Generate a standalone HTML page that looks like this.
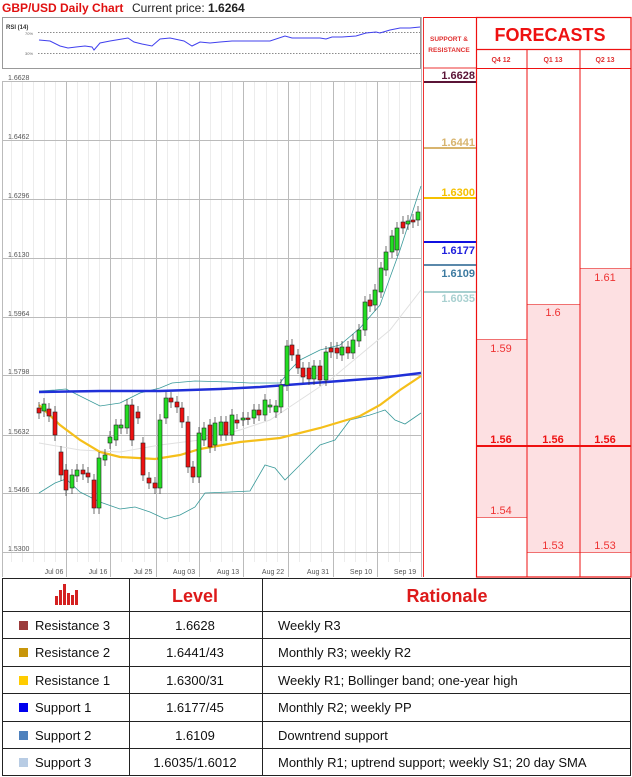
<!DOCTYPE html>
<html><head><meta charset="utf-8"><style>
body{margin:0;background:#fff;width:632px;height:777px;overflow:hidden;font-family:"Liberation Sans",sans-serif}
svg{display:block}
</style></head><body>
<svg width="632" height="777" viewBox="0 0 632 777" xmlns="http://www.w3.org/2000/svg" font-family="Liberation Sans, sans-serif">
<rect width="632" height="777" fill="#fff"/>
<text x="2" y="12" font-size="12" font-weight="bold" fill="#e01010">GBP/USD Daily Chart</text>
<text x="132" y="12" font-size="12" fill="#222">Current price: <tspan font-weight="bold">1.6264</tspan></text>
<!-- RSI -->
<rect x="2.5" y="17.5" width="418" height="51" fill="#fff" stroke="#999"/>
<text x="6" y="29" font-size="6" font-weight="bold" fill="#333">RSI (14)</text>
<text x="25" y="35" font-size="4" fill="#666">70%</text>
<text x="25" y="55" font-size="4" fill="#666">30%</text>
<line x1="38" y1="32.5" x2="420" y2="32.5" stroke="#666" stroke-dasharray="1.5,1.5" stroke-width="0.8"/>
<line x1="38" y1="53.5" x2="420" y2="53.5" stroke="#666" stroke-dasharray="1.5,1.5" stroke-width="0.8"/>
<polyline fill="none" stroke="#4040ee" stroke-width="1" points="39,40 50,41 60,46 68,48 76,47 85,46 92,47 94,50 100,43 110,41 122,39 128,38 134,42 142,44 152,46 160,39 170,38 184,41 192,46 200,42 210,43 220,42 232,41 250,41 270,41 285,36 292,38 300,38 310,38 320,38 326,39 332,37 342,37 356,36 366,33 376,32 380,33 390,30 400,28 410,28 420,27"/>
<!-- chart grid -->
<rect x="2.5" y="81" width="418" height="496" fill="#fff"/>
<g stroke="#ececec" stroke-width="1">
<line x1="77.5" y1="81" x2="77.5" y2="562"/><line x1="88.5" y1="81" x2="88.5" y2="562"/><line x1="99.5" y1="81" x2="99.5" y2="562"/>
<line x1="121.5" y1="81" x2="121.5" y2="562"/><line x1="132.5" y1="81" x2="132.5" y2="562"/><line x1="144.5" y1="81" x2="144.5" y2="562"/>
<line x1="167.5" y1="81" x2="167.5" y2="562"/><line x1="178.5" y1="81" x2="178.5" y2="562"/><line x1="189.5" y1="81" x2="189.5" y2="562"/>
<line x1="210.5" y1="81" x2="210.5" y2="562"/><line x1="221.5" y1="81" x2="221.5" y2="562"/><line x1="232.5" y1="81" x2="232.5" y2="562"/>
<line x1="254.5" y1="81" x2="254.5" y2="562"/><line x1="266.5" y1="81" x2="266.5" y2="562"/><line x1="277.5" y1="81" x2="277.5" y2="562"/>
<line x1="299.5" y1="81" x2="299.5" y2="562"/><line x1="310.5" y1="81" x2="310.5" y2="562"/><line x1="321.5" y1="81" x2="321.5" y2="562"/>
<line x1="344.5" y1="81" x2="344.5" y2="562"/><line x1="355.5" y1="81" x2="355.5" y2="562"/><line x1="366.5" y1="81" x2="366.5" y2="562"/>
<line x1="388.5" y1="81" x2="388.5" y2="562"/><line x1="399.5" y1="81" x2="399.5" y2="562"/><line x1="410.5" y1="81" x2="410.5" y2="562"/>
<line x1="11.5" y1="81" x2="11.5" y2="562"/><line x1="22.5" y1="81" x2="22.5" y2="562"/><line x1="33.5" y1="81" x2="33.5" y2="562"/><line x1="44.5" y1="81" x2="44.5" y2="562"/><line x1="55.5" y1="81" x2="55.5" y2="562"/>
</g>
<g stroke="#bbb" stroke-width="1">
<line x1="66.5" y1="81" x2="66.5" y2="577"/><line x1="110.5" y1="81" x2="110.5" y2="577"/><line x1="156.5" y1="81" x2="156.5" y2="577"/><line x1="199.5" y1="81" x2="199.5" y2="577"/><line x1="243.5" y1="81" x2="243.5" y2="577"/><line x1="288.5" y1="81" x2="288.5" y2="577"/><line x1="333.5" y1="81" x2="333.5" y2="577"/><line x1="377.5" y1="81" x2="377.5" y2="577"/>
<line x1="2" y1="81.5" x2="421" y2="81.5"/><line x1="2" y1="140.5" x2="421" y2="140.5"/><line x1="2" y1="199.5" x2="421" y2="199.5"/><line x1="2" y1="258.5" x2="421" y2="258.5"/><line x1="2" y1="317.5" x2="421" y2="317.5"/><line x1="2" y1="375.5" x2="421" y2="375.5"/><line x1="2" y1="435.5" x2="421" y2="435.5"/><line x1="2" y1="493.5" x2="421" y2="493.5"/><line x1="2" y1="552.5" x2="421" y2="552.5"/>
<line x1="2.5" y1="81" x2="2.5" y2="577"/><line x1="421.5" y1="17" x2="421.5" y2="577"/>
</g>
<g font-size="7" fill="#555">
<text x="8" y="80">1.6628</text><text x="8" y="139">1.6462</text><text x="8" y="198">1.6296</text><text x="8" y="257">1.6130</text><text x="8" y="316">1.5964</text><text x="8" y="374">1.5798</text><text x="8" y="434">1.5632</text><text x="8" y="492">1.5466</text><text x="8" y="551">1.5300</text>
</g>
<g font-size="7" fill="#555" text-anchor="middle">
<text x="54" y="574">Jul 06</text><text x="98" y="574">Jul 16</text><text x="143" y="574">Jul 25</text><text x="184" y="574">Aug 03</text><text x="228" y="574">Aug 13</text><text x="273" y="574">Aug 22</text><text x="318" y="574">Aug 31</text><text x="361" y="574">Sep 10</text><text x="405" y="574">Sep 19</text>
</g>
<!-- indicators -->
<polyline fill="none" stroke="#e0e0e0" stroke-width="1" points="39,443 80,450 120,452 160,445 200,440 240,430 270,420 300,400 330,380 360,355 390,330 421,290"/>
<polyline fill="none" stroke="#3a9a9a" stroke-width="0.8" points="39,391 55,390 66,389 80,396 100,406 120,403 140,393 160,388 172,383 195,381 230,382 250,383 280,383 290,370 300,360 320,350 340,345 360,328 380,305 400,250 421,186"/>
<polyline fill="none" stroke="#3a9a9a" stroke-width="0.8" points="39,493 55,483 66,479 80,492 100,502 120,509 135,507 150,512 165,519 180,515 195,507 205,493 230,492 250,491 265,465 275,468 285,480 295,470 320,445 335,440 350,420 370,415 385,410 395,420 405,424 421,413"/>
<polyline fill="none" stroke="#f5bf1a" stroke-width="2.2" points="39,405 60,425 80,440 100,452 120,457 155,459 180,455 200,449 240,442 280,438 320,428 360,416 380,405 400,390 421,376"/>
<polyline fill="none" stroke="#2030d8" stroke-width="2.5" points="39,392 100,391 160,391 220,389 260,387 300,384 340,381 380,378 421,373"/>
<!-- candles -->
<g id="c" stroke="#222" stroke-width="0.8"></g>
<!-- S&R column -->
<line x1="423.5" y1="17" x2="423.5" y2="577" stroke="#e33" stroke-width="1"/>
<text x="449" y="41" font-size="6.5" font-weight="bold" fill="#e03030" text-anchor="middle">SUPPORT &amp;</text>
<text x="449" y="52" font-size="6.5" font-weight="bold" fill="#e03030" text-anchor="middle">RESISTANCE</text>
<line x1="424" y1="68" x2="476" y2="68" stroke="#e33"/>
<g font-size="11" font-weight="bold" text-anchor="end">
<text x="475" y="79" fill="#5a1436">1.6628</text>
<text x="475" y="146" fill="#d8b46e">1.6441</text>
<text x="475" y="196" fill="#f5c000">1.6300</text>
<text x="475" y="254" fill="#2020dd">1.6177</text>
<text x="475" y="277" fill="#3c7aa0">1.6109</text>
<text x="475" y="302" fill="#a8d0d0">1.6035</text>
</g>
<rect x="424" y="81" width="52" height="2" fill="#5a1436"/>
<rect x="424" y="147" width="52" height="2" fill="#d8b46e"/>
<rect x="424" y="197" width="52" height="2" fill="#f5c000"/>
<rect x="424" y="241" width="52" height="2" fill="#1010e0"/>
<rect x="424" y="264" width="52" height="2" fill="#5a88aa"/>
<rect x="424" y="291" width="52" height="2" fill="#a8d0d0"/>
<!-- forecasts -->
<rect x="477" y="339" width="50" height="178" fill="#fde0e2"/>
<rect x="527" y="304" width="53" height="248" fill="#fde0e2"/>
<rect x="580" y="268" width="51" height="284" fill="#fde0e2"/>
<g stroke="#f07070" stroke-width="1">
<line x1="476" y1="339.5" x2="527" y2="339.5"/><line x1="476" y1="517.5" x2="527" y2="517.5"/>
<line x1="527" y1="304.5" x2="580" y2="304.5"/><line x1="527" y1="552.5" x2="631" y2="552.5"/>
<line x1="580" y1="268.5" x2="631" y2="268.5"/>
</g>
<g fill="none" stroke="#ee1111">
<rect x="476.5" y="17.5" width="154.5" height="559.5" stroke-width="1.2"/>
<line x1="424" y1="17.5" x2="476" y2="17.5"/>
<line x1="476" y1="49.5" x2="631" y2="49.5" stroke-width="1.2"/>
<line x1="476" y1="68.5" x2="631" y2="68.5"/>
<line x1="527" y1="49" x2="527" y2="577"/><line x1="580" y1="49" x2="580" y2="577"/>
<line x1="476" y1="446" x2="631" y2="446" stroke-width="2"/>
</g>
<text x="550" y="41" font-size="18" font-weight="bold" fill="#ee1111" text-anchor="middle">FORECASTS</text>
<g font-size="7" font-weight="bold" fill="#e03030" text-anchor="middle"><text x="501" y="62">Q4 12</text><text x="553" y="62">Q1 13</text><text x="605" y="62">Q2 13</text></g>
<g font-size="11" fill="#ee3333" text-anchor="middle">
<text x="501" y="352">1.59</text><text x="501" y="514">1.54</text>
<text x="553" y="316">1.6</text><text x="553" y="549">1.53</text>
<text x="605" y="281">1.61</text><text x="605" y="549">1.53</text>
</g>
<g font-size="11" font-weight="bold" fill="#ee1111" text-anchor="middle"><text x="501" y="443">1.56</text><text x="553" y="443">1.56</text><text x="605" y="443">1.56</text></g>
<!-- bottom table -->
<rect x="0" y="578" width="632" height="199" fill="#fff"/>
<g stroke="#222" stroke-width="1" fill="none">
<rect x="2.5" y="578.5" width="628" height="197"/>
<line x1="129.5" y1="578" x2="129.5" y2="776"/><line x1="262.5" y1="578" x2="262.5" y2="776"/>
<line x1="2" y1="611.5" x2="631" y2="611.5"/><line x1="2" y1="638.5" x2="631" y2="638.5"/><line x1="2" y1="666.5" x2="631" y2="666.5"/><line x1="2" y1="693.5" x2="631" y2="693.5"/><line x1="2" y1="721.5" x2="631" y2="721.5"/><line x1="2" y1="748.5" x2="631" y2="748.5"/>
</g>
<g fill="#d42020"><rect x="55" y="596" width="3" height="9"/><rect x="59" y="590" width="3" height="15"/><rect x="63" y="584" width="3" height="21"/><rect x="67" y="593" width="3" height="12"/><rect x="71" y="595" width="3" height="10"/><rect x="75" y="590" width="3" height="15"/></g>
<g font-size="18" font-weight="bold" fill="#dd1a1a" text-anchor="middle"><text x="195" y="602">Level</text><text x="447" y="602">Rationale</text></g>
<rect x="19" y="621" width="9" height="9" fill="#9b3b3b"/>
<rect x="19" y="648" width="9" height="9" fill="#c8960a"/>
<rect x="19" y="676" width="9" height="9" fill="#ffcc00"/>
<rect x="19" y="703" width="9" height="9" fill="#0000ee"/>
<rect x="19" y="731" width="9" height="9" fill="#4f81bd"/>
<rect x="19" y="758" width="9" height="9" fill="#b8cce4"/>
<g font-size="13" fill="#111">
<text x="35" y="630">Resistance 3</text><text x="35" y="657">Resistance 2</text><text x="35" y="685">Resistance 1</text><text x="35" y="712">Support 1</text><text x="35" y="740">Support 2</text><text x="35" y="767">Support 3</text>
<text x="278" y="630">Weekly R3</text><text x="278" y="657">Monthly R3; weekly R2</text><text x="278" y="685">Weekly R1; Bollinger band; one-year high</text><text x="278" y="712">Monthly R2; weekly PP</text><text x="278" y="740">Downtrend support</text><text x="278" y="767">Monthly R1; uptrend support; weekly S1; 20 day SMA</text>
</g>
<g font-size="13" fill="#111" text-anchor="middle">
<text x="195" y="630">1.6628</text><text x="195" y="657">1.6441/43</text><text x="195" y="685">1.6300/31</text><text x="195" y="712">1.6177/45</text><text x="195" y="740">1.6109</text><text x="195" y="767">1.6035/1.6012</text>
</g>
</svg>
<script>
var d=[[39,413,408,'r'],[44,411,404,'g'],[49,409,416,'r'],[55,412,435,'r'],[61,452,475,'r'],[66,470,490,'r'],[72,488,475,'g'],[77,476,470,'g'],[83,470,474,'r'],[88,473,477,'r'],[94,480,508,'r'],[99,508,458,'g'],[105,460,455,'g'],[110,443,437,'g'],[116,440,425,'g'],[121,428,425,'g'],[127,428,405,'g'],[132,405,440,'r'],[138,412,418,'r'],[143,443,475,'r'],[149,478,483,'r'],[155,483,488,'r'],[160,488,420,'g'],[166,418,398,'g'],[171,398,402,'r'],[177,402,407,'r'],[182,408,422,'r'],[188,422,467,'r'],[193,467,477,'r'],[199,477,433,'g'],[204,440,428,'g'],[210,425,447,'r'],[215,445,423,'g'],[221,435,422,'g'],[226,422,435,'r'],[232,435,415,'g'],[237,420,423,'r'],[243,420,418,'g'],[248,418,419,'r'],[254,418,410,'g'],[259,410,415,'r'],[265,415,400,'g'],[270,407,405,'g'],[276,412,406,'g'],[281,407,385,'g'],[287,385,346,'g'],[292,345,355,'r'],[298,355,368,'r'],[303,368,377,'r'],[309,368,379,'r'],[314,379,366,'g'],[320,366,380,'r'],[326,380,352,'g'],[331,348,352,'r'],[337,348,353,'r'],[342,355,347,'g'],[348,347,353,'r'],[353,353,340,'g'],[359,341,330,'g'],[365,330,302,'g'],[370,300,306,'r'],[375,305,290,'g'],[381,292,268,'g'],[386,270,252,'g'],[392,252,236,'g'],[397,250,228,'g'],[403,222,228,'r'],[408,224,221,'g'],[413,220,222,'r'],[418,220,212,'g']];
var g=document.getElementById('c'),s='';
d.forEach(function(c){var t=Math.min(c[1],c[2]),b=Math.max(c[1],c[2]),h=Math.max(b-t,1.5);
s+='<line x1="'+c[0]+'" x2="'+c[0]+'" y1="'+(t-6)+'" y2="'+(b+6)+'" stroke="#333" stroke-width="0.7"/>';
s+='<rect x="'+(c[0]-2)+'" y="'+t+'" width="4" height="'+h+'" fill="'+(c[3]=='g'?'#22dd22':'#ee1111')+'" stroke="#222" stroke-width="0.6"/>';});
g.innerHTML=s;
</script>
</body></html>
